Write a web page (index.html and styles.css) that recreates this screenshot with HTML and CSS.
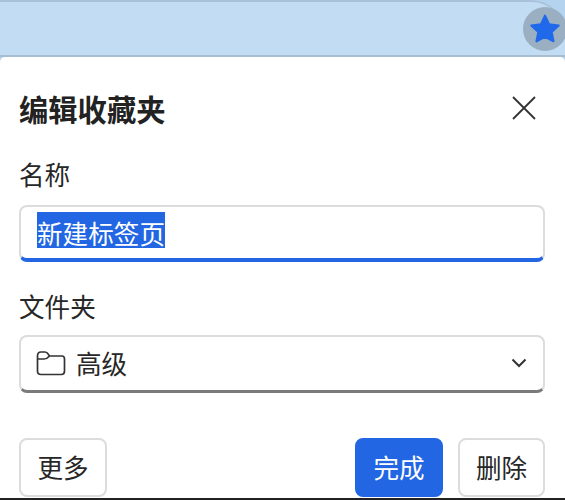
FILE: index.html
```html
<!DOCTYPE html>
<html lang="zh-CN">
  <head>
    <meta charset="UTF-8" />
    <title>编辑收藏夹</title>
    <link rel="stylesheet" href="styles.css">
  </head>
  <body>
    <!-- Address bar strip -->
    <div class="topBar">
      <div class="starButton">
        <svg width="34" height="34" viewBox="0 0 32 32">
          <path d="M16 3.5 L19.8 11.5 L28.9 12.7 L22.3 18.9 L24 27.6 L16 23.3 L8 27.6 L9.7 18.9 L3.1 12.7 L12.2 11.5 Z" fill="#1f69ea" stroke="#1f69ea" stroke-width="2" stroke-linejoin="round" />
        </svg>
      </div>
    </div>

    <div class="dialog">
      <div class="dialogHeader">
        <h1>编辑收藏夹</h1>
        <svg class="closeIcon" width="26" height="26" viewBox="0 0 26 26">
          <path d="M2 2 L24 24 M24 2 L2 24" stroke="#333" stroke-width="1.8" fill="none" />
        </svg>
      </div>

      <div class="fieldLabel">名称</div>
      <div class="nameInput"><span class="selectedText">新建标签页</span></div>

      <div class="fieldLabel folderLabel">文件夹</div>
      <div class="folderSelect">
        <svg class="folderIcon" width="30" height="26" viewBox="0 0 30 26">
          <path d="M1.5 6 Q1.5 2 5 2 L9 2 Q11 2 12.5 4.5 L13.5 6 L26 6 Q28.5 6 28.5 9 L28.5 21 Q28.5 24.5 25.5 24.5 L5 24.5 Q1.5 24.5 1.5 21 Z M1.5 9 L8 9 Q11 9 13.5 6" stroke="#333" stroke-width="1.7" fill="none" />
        </svg>
        <span class="folderName">高级</span>
        <svg class="chevron" width="16" height="10" viewBox="0 0 16 10">
          <path d="M1.5 1.5 L8 8 L14.5 1.5" stroke="#333" stroke-width="2" fill="none" />
        </svg>
      </div>

      <div class="actions">
        <button class="btn">更多</button>
        <div class="actionsRight">
          <button class="btn primary">完成</button>
          <button class="btn deleteBtn">删除</button>
        </div>
      </div>
    </div>
  </body>
</html>
```

FILE: styles.css
```css
html,
body {
  margin: 0;
  height: 500px;
  overflow: hidden;
}
body {
  font-family: "Liberation Sans", "Noto Sans CJK SC", sans-serif;
  background-color: #b4d3ee;
  color: #272727;
}
.topBar {
  height: 57px;
  box-sizing: border-box;
  border-top: 2px solid #a9c2da;
  border-bottom: 2px solid #a9bdd0;
  border-top-right-radius: 34px;
  background-color: #c1dcf3;
  display: flex;
  justify-content: flex-end;
  align-items: center;
}
.starButton {
  flex: none;
  width: 44px;
  height: 44px;
  margin-right: -2px;
  border-radius: 50%;
  background-color: #9aafc2;
  display: flex;
  align-items: center;
  justify-content: center;
}
.dialog {
  height: 443px;
  box-sizing: border-box;
  padding: 0 20px 0 19px;
  background-color: #fff;
  border-bottom: 2px solid #222;
  border-top-left-radius: 5px;
  border-top-right-radius: 5px;
}
.dialogHeader {
  display: flex;
  justify-content: space-between;
  align-items: center;
  height: 102px;
  padding-right: 8px;
  box-sizing: border-box;
}
.dialogHeader h1 {
  margin: 0;
  font-size: 29.3px;
  font-weight: bold;
  color: #222;
}
.closeIcon {
  display: block;
}
.fieldLabel {
  font-size: 25.6px;
  line-height: 34px;
}
.nameInput {
  margin-top: 12px;
  height: 57px;
  box-sizing: border-box;
  border: 2px solid #dcdcdc;
  border-bottom: 4px solid #2266e3;
  border-radius: 8px;
  padding: 5px 16px 0;
}
.selectedText {
  display: inline-block;
  padding-top: 10px;
  background-color: #2266e3;
  color: #fff;
  font-size: 25.6px;
  line-height: 26px;
}
.folderLabel {
  margin-top: 29px;
}
.folderSelect {
  margin-top: 10px;
  height: 58px;
  box-sizing: border-box;
  border: 2px solid #dcdcdc;
  border-bottom: 3px solid #7b7b7b;
  border-radius: 8px;
  padding: 0 16px 2px 15px;
  display: flex;
  align-items: center;
}
.folderIcon {
  margin-right: 10px;
}
.folderName {
  font-size: 25.6px;
}
.chevron {
  margin-left: auto;
}
.actions {
  display: flex;
  justify-content: space-between;
  margin-top: 45px;
}
.actionsRight {
  display: flex;
  gap: 15px;
}
.btn {
  width: 88px;
  height: 59px;
  box-sizing: border-box;
  border: 2px solid #dcdcdc;
  border-radius: 8px;
  background-color: #fff;
  color: #272727;
  font-family: inherit;
  font-size: 25.6px;
  padding: 0 0 2px;
}
.deleteBtn {
  width: 87px;
}
.primary {
  background-color: #2266e3;
  border-color: #2266e3;
  color: #fff;
}
```
